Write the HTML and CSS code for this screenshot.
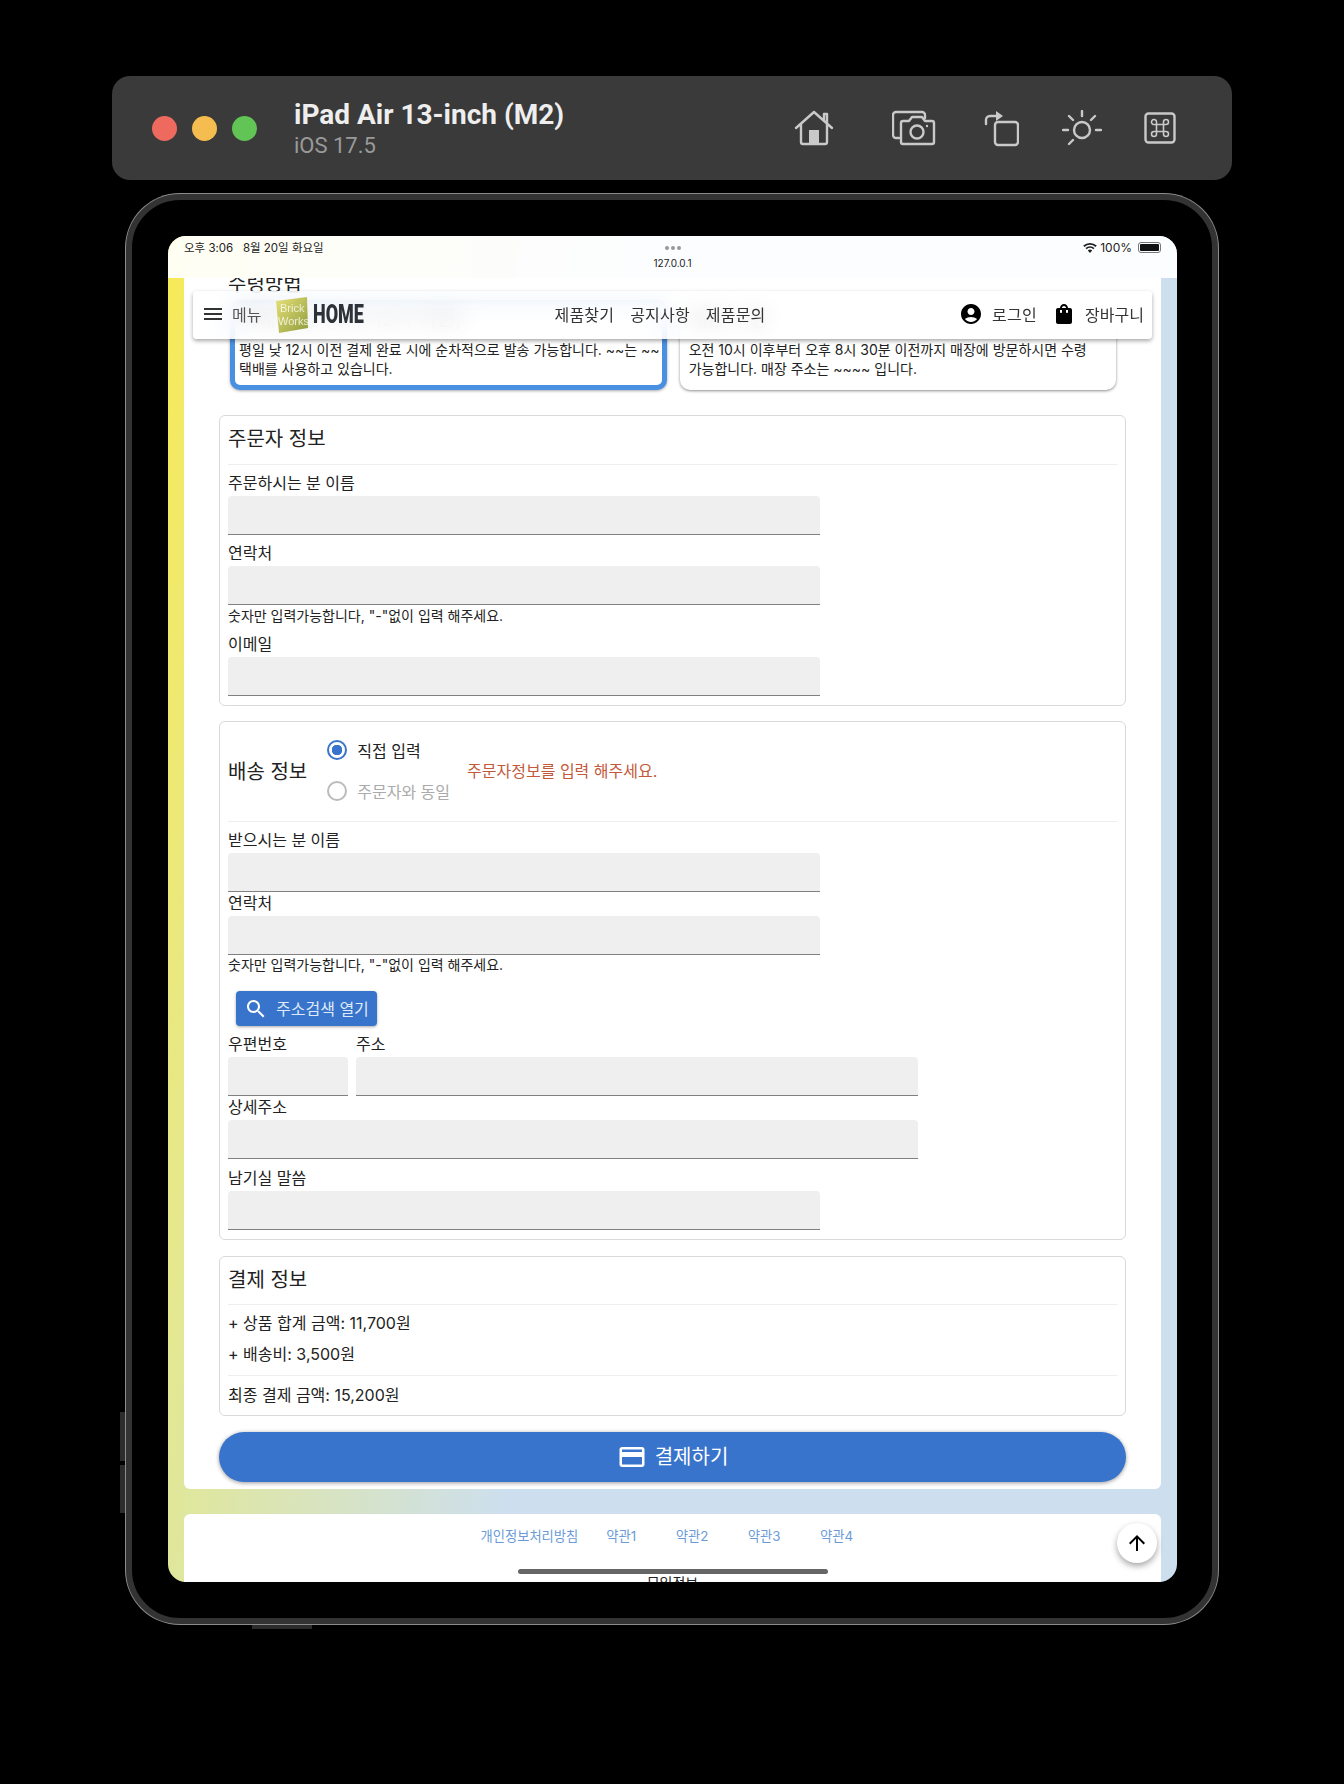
FILE: index.html
```html
<!DOCTYPE html>
<html lang="ko">
<head>
  <meta charset="UTF-8" />
  <meta name="viewport" content="width=device-width, initial-scale=1.0"/>
  <title>주문하기</title>
  <link rel="stylesheet" href="styles.css">
</head>
<body>
  <header class="sim-bar">
    <div class="sim-dots">
      <span class="dot dot-red"></span>
      <span class="dot dot-yellow"></span>
      <span class="dot dot-green"></span>
    </div>
    <div class="sim-name">
      <div class="sim-title">iPad Air 13-inch (M2)</div>
      <div class="sim-os">iOS 17.5</div>
    </div>
    <div class="sim-icons">
      <svg class="sim-icon icon-home" width="40" height="36" viewBox="0 0 40 36"><path d="M2 18 20 2l18 16M7 14v18a2 2 0 0 0 2 2h22a2 2 0 0 0 2-2V14M30 10V4h3v9"/><rect class="solid" x="15" y="20" width="10" height="13"/></svg>
      <svg class="sim-icon icon-camera" width="44" height="36" viewBox="0 0 44 36"><path d="M7 28H4a3 3 0 0 1-3-3V5a3 3 0 0 1 3-3h26a3 3 0 0 1 3 3v3"/><path d="M11 11h6l3-4h10l3 4h7a2 2 0 0 1 2 2v19a2 2 0 0 1-2 2H11a2 2 0 0 1-2-2V13a2 2 0 0 1 2-2z"/><circle cx="25" cy="22" r="6.5"/><circle class="solid" cx="35" cy="16" r="1.2"/></svg>
      <svg class="sim-icon icon-rotate" width="35" height="37" viewBox="0 0 35 37"><rect x="11" y="12" width="23" height="23" rx="3"/><path d="M2 14V10a4 4 0 0 1 4-4h6"/><path class="solid" d="M12 1l7 5-7 5z"/></svg>
      <svg class="sim-icon icon-sun" width="40" height="36" viewBox="0 0 40 36"><circle cx="20" cy="20" r="8"/><path d="M20 1v5M7 6l4 4M33 6l-4 4M1 20h5M34 20h5M7 34l4-4"/></svg>
      <svg class="sim-icon icon-cmd" width="32" height="32" viewBox="0 0 32 32"><rect x="1.500" y="1.500" width="29" height="29" rx="3"/><path class="thin" d="M12.500 12.500v7M19.500 12.500v7M12.500 12.500h7M12.500 19.500h7M12.500 12.500h-2a2.500 2.500 0 1 1 2-2.500zM19.500 12.500V10a2.500 2.500 0 1 1 2.500 2.500zM12.500 19.500V22a2.500 2.500 0 1 1-2.500-2.500zM19.500 19.500H22a2.500 2.500 0 1 1-2.500 2.500z"/></svg>
    </div>
  </header>

  <div class="device">
    <span class="side-btn side-btn-a"></span>
    <span class="side-btn side-btn-b"></span>
    <span class="side-btn side-btn-c"></span>

    <div class="screen">
      <div class="statusbar">
        <div class="status-left">오후 3:06 &nbsp; 8월 20일 화요일</div>
        <div class="status-mid">
          <div class="status-dots"><i></i><i></i><i></i></div>
          <div class="status-url">127.0.0.1</div>
        </div>
        <div class="status-right">
          <svg width="14" height="11" viewBox="0 0 14 11"><path d="M7 11 4.800 8.500a3.200 3.200 0 0 1 4.400 0zM3.700 7.300 2.500 6a6.700 6.700 0 0 1 9 0l-1.200 1.300a5 5 0 0 0-6.600 0zM1.500 4.900.2 3.500a10.200 10.200 0 0 1 13.600 0l-1.300 1.400a8.300 8.300 0 0 0-11 0z" fill="#222"/></svg>
          <span>100%</span>
          <span class="battery"><i></i></span>
        </div>
      </div>

      <nav class="topnav">
        <div class="nav-left">
          <svg class="nav-burger" width="24" height="24" viewBox="0 0 24 24"><path d="M3 18h18v-2H3v2zm0-5h18v-2H3v2zm0-7v2h18V6H3z"/></svg>
          <span class="nav-menu">메뉴</span>
          <svg class="nav-logo" width="36" height="38" viewBox="0 0 36 38">
            <defs><linearGradient id="logoFill" x1="0" y1="0" x2="1" y2="1"><stop offset="0" stop-color="#e8e27a"/><stop offset="1" stop-color="#8f9c3c"/></linearGradient></defs>
            <path d="M3 5 34 1l1 31-29 5z" fill="url(#logoFill)"/>
            <text x="7" y="16" class="logo-text">Brick</text>
            <text x="5" y="29" class="logo-text">Works</text>
          </svg>
          <span class="nav-home">HOME</span>
        </div>
        <div class="nav-links">
          <span>제품찾기</span>
          <span>공지사항</span>
          <span>제품문의</span>
        </div>
        <div class="nav-right">
          <svg width="24" height="24" viewBox="0 0 24 24"><path d="M12 2C6.480 2 2 6.480 2 12s4.480 10 10 10 10-4.480 10-10S17.520 2 12 2zm0 4c1.930 0 3.500 1.570 3.500 3.500S13.930 13 12 13s-3.500-1.570-3.500-3.500S10.070 6 12 6zm0 14c-2.030 0-4.430-.820-6.140-2.880C7.550 15.800 9.680 15 12 15s4.450.800 6.140 2.120C16.430 19.180 14.030 20 12 20z"/></svg>
          <span class="nav-login">로그인</span>
          <svg width="24" height="24" viewBox="0 0 24 24"><path d="M18 6h-2c0-2.210-1.790-4-4-4S8 3.790 8 6H6c-1.100 0-2 .900-2 2v12c0 1.100.900 2 2 2h12c1.100 0 2-.900 2-2V8c0-1.100-.900-2-2-2zm-8 4c0 .550-.450 1-1 1s-1-.450-1-1V8h2v2zm2-6c1.100 0 2 .900 2 2h-4c0-1.100.900-2 2-2zm4 6c0 .550-.450 1-1 1s-1-.450-1-1V8h2v2z"/></svg>
          <span>장바구니</span>
        </div>
      </nav>

      <div class="page">
        <main class="panel">
          <h3 class="pickup-title">수령방법</h3>
          <div class="pickup-row">
            <div class="pickup-card pickup-active">
              <div class="pickup-head">택배 발송 (오후 12시 이전)</div>
              <p class="pickup-nowrap">평일 낮 12시 이전 결제 완료 시에 순차적으로 발송 가능합니다. ~~는 ~~<br>택배를 사용하고 있습니다.</p>
            </div>
            <div class="pickup-card">
              <div class="pickup-head">매장 수령</div>
              <p>오전 10시 이후부터 오후 8시 30분 이전까지 매장에 방문하시면 수령 가능합니다. 매장 주소는 ~~~~ 입니다.</p>
            </div>
          </div>

          <section class="box box-orderer">
            <div class="box-title">주문자 정보</div>
            <div class="field">
              <label>주문하시는 분 이름</label>
              <input class="text-input input-md" type="text" />
            </div>
            <div class="field">
              <label>연락처</label>
              <input class="text-input input-md" type="text" />
              <div class="hint">숫자만 입력가능합니다, "-"없이 입력 해주세요.</div>
            </div>
            <div class="field">
              <label>이메일</label>
              <input class="text-input input-md" type="text" />
            </div>
          </section>

          <section class="box">
            <div class="ship-head">
              <div class="ship-title">배송 정보</div>
              <div class="radio-group">
                <div class="radio-row"><span class="radio radio-on"></span>직접 입력</div>
                <div class="radio-row radio-off"><span class="radio"></span>주문자와 동일</div>
              </div>
              <div class="ship-warn">주문자정보를 입력 해주세요.</div>
            </div>
            <div class="field">
              <label>받으시는 분 이름</label>
              <input class="text-input input-md" type="text" />
            </div>
            <div class="field field-tight">
              <label>연락처</label>
              <input class="text-input input-md" type="text" />
              <div class="hint">숫자만 입력가능합니다, "-"없이 입력 해주세요.</div>
            </div>
            <button class="addr-btn">
              <svg width="24" height="24" viewBox="0 0 24 24"><path d="M15.500 14h-.790l-.280-.270C15.410 12.590 16 11.110 16 9.500 16 5.910 13.090 3 9.500 3S3 5.910 3 9.500 5.910 16 9.500 16c1.610 0 3.090-.590 4.230-1.570l.270.280v.790l5 4.990L20.490 19l-4.990-5zm-6 0C7.010 14 5 11.990 5 9.500S7.010 5 9.500 5 14 7.010 14 9.500 11.990 14 9.500 14z"/></svg>
              주소검색 열기
            </button>
            <div class="addr-row">
              <div class="field">
                <label>우편번호</label>
                <input class="text-input input-zip" type="text" />
              </div>
              <div class="field">
                <label>주소</label>
                <input class="text-input input-addr" type="text" />
              </div>
            </div>
            <div class="field field-tight">
              <label>상세주소</label>
              <input class="text-input input-lg" type="text" />
            </div>
            <div class="field field-note">
              <label>남기실 말씀</label>
              <input class="text-input input-md" type="text" />
            </div>
          </section>

          <section class="box box-pay">
            <div class="box-title">결제 정보</div>
            <div class="pay-lines">
              <div>+ 상품 합계 금액: 11,700원</div>
              <div>+ 배송비: 3,500원</div>
            </div>
            <div class="pay-total">최종 결제 금액: 15,200원</div>
          </section>

          <button class="pay-btn">
            <svg width="30" height="30" viewBox="0 0 24 24"><path d="M20 4H4c-1.110 0-1.990.890-1.990 2L2 18c0 1.110.890 2 2 2h16c1.110 0 2-.890 2-2V6c0-1.110-.890-2-2-2zm0 14H4v-6h16v6zm0-10H4V6h16v2z"/></svg>
            결제하기
          </button>
        </main>

        <footer class="foot">
          <div class="foot-links">
            <a>개인정보처리방침</a>
            <a class="foot-term">약관1</a>
            <a class="foot-term">약관2</a>
            <a class="foot-term">약관3</a>
            <a class="foot-term">약관4</a>
          </div>
          <div class="foot-info">모임정보</div>
        </footer>
      </div>

      <button class="up-btn">
        <svg width="24" height="24" viewBox="0 0 24 24"><path d="M4 12l1.410 1.410L11 7.830V20h2V7.830l5.580 5.590L20 12l-8-8-8 8z"/></svg>
      </button>
      <span class="home-bar"></span>
    </div>
  </div>
</body>
</html>
```

FILE: styles.css
```css
* {
  box-sizing: border-box;
}

body {
  margin: 0;
  width: 1344px;
  height: 1784px;
  padding-top: 76px;
  overflow: hidden;
  background: #000;
  color: #222;
  font-family: Inter, "Noto Sans CJK KR", sans-serif;
  font-size: 16px;
}

/* simulator title bar */
.sim-bar {
  display: flex;
  align-items: center;
  height: 104px;
  margin: 0 112px;
  padding: 0 56px 0 40px;
  background: #3a3a3a;
  border-radius: 18px;
}

.sim-dots {
  display: flex;
  gap: 15px;
  margin-right: 37px;
}

.dot {
  width: 25px;
  height: 25px;
  border-radius: 50%;
}

.dot-red { background: #ee6a5f; }
.dot-yellow { background: #f5bd4f; }
.dot-green { background: #61c454; }

.sim-title {
  color: #eee;
  font-family: Roboto, sans-serif;
  font-size: 28px;
  font-weight: 700;
  line-height: 36px;
}

.sim-os {
  color: #9a9a9a;
  font-family: Roboto, sans-serif;
  font-size: 22px;
  line-height: 26px;
}

.sim-icons {
  display: flex;
  align-items: center;
  gap: 42px;
  margin-left: auto;
}

.sim-icon {
  flex: none;
  fill: none;
  stroke: #c9c9c9;
  stroke-width: 2.4;
  stroke-linecap: round;
  stroke-linejoin: round;
}

.sim-icon .solid {
  fill: #c9c9c9;
  stroke: none;
}

.sim-icon .thin {
  stroke-width: 1.6;
}

.icon-home { margin-right: 16px; }
.icon-camera { margin-right: 6px; }
.icon-rotate { margin-right: 1px; }

/* device frame */
.device {
  position: relative;
  width: 1092px;
  height: 1430px;
  margin: 14px 0 0 126px;
  padding: 36px 35px 36px 36px;
  background: #000;
  border: 6px solid #333;
  border-radius: 54px;
  box-shadow: 0 0 0 1px #8c8c8c;
}

.side-btn {
  position: absolute;
  background: #2c2c2c;
}

.side-btn-a { left: -12px; top: 1212px; width: 5px; height: 49px; }
.side-btn-b { left: -12px; top: 1265px; width: 5px; height: 48px; }
.side-btn-c { left: 120px; top: 1425px; width: 60px; height: 4px; }

.screen {
  position: relative;
  display: flex;
  flex-direction: column;
  width: 1009px;
  height: 1346px;
  overflow: hidden;
  border-radius: 18px;
  background: linear-gradient(97deg, #f8ea55 0%, #e0e79b 14%, #cddfee 42%, #cddfee 100%);
}

/* ios status bar */
.statusbar {
  display: grid;
  flex: none;
  grid-template-columns: 1fr auto 1fr;
  height: 42px;
  padding: 4px 16px 0;
  background: rgba(255, 255, 255, 0.93);
  font-size: 11.500px;
  line-height: 16px;
}

.status-mid {
  text-align: center;
}

.status-dots {
  display: flex;
  justify-content: center;
  gap: 2px;
  padding-top: 6px;
}

.status-dots i {
  width: 4px;
  height: 4px;
  background: #999;
  border-radius: 50%;
}

.status-url {
  margin-top: 6px;
  font-size: 10px;
  line-height: 14px;
}

.status-right {
  display: flex;
  align-items: flex-start;
  justify-content: flex-end;
  gap: 3px;
  font-size: 12px;
}

.status-right svg {
  margin-top: 2px;
}

.battery {
  width: 23px;
  height: 11px;
  margin-left: 3px;
  margin-top: 2px;
  padding: 1px;
  border: 1px solid #777;
  border-radius: 3px;
}

.battery i {
  display: block;
  height: 100%;
  background: #111;
  border-radius: 1px;
}

/* floating nav */
.topnav {
  position: absolute;
  top: 55px;
  left: 25px;
  z-index: 5;
  display: grid;
  grid-template-columns: 1fr auto 1fr;
  align-items: center;
  width: 959px;
  height: 48px;
  padding: 0 8px 2px;
  background: rgba(255, 255, 255, 0.82);
  backdrop-filter: blur(10px);
  border-radius: 4px;
  box-shadow: 0 2px 4px rgba(0, 0, 0, 0.35);
}

.nav-left, .nav-right, .nav-links {
  display: flex;
  align-items: center;
}

.nav-burger {
  fill: #333;
}

.nav-menu {
  margin: 0 12px 0 7px;
  color: #555;
  font-size: 16px;
}

.nav-logo {
  flex: none;
  margin-top: 2px;
}

.logo-text {
  fill: rgba(255, 255, 255, 0.75);
  font-family: "Liberation Sans", sans-serif;
  font-size: 11px;
}

.nav-home {
  margin-left: 4px;
  color: #2c3238;
  font-family: Roboto, sans-serif;
  font-size: 25px;
  font-weight: 900;
  transform: scaleX(0.72);
  transform-origin: left center;
}

.nav-links {
  gap: 16px;
  margin-right: 25px;
  color: #333;
  letter-spacing: 0.2px;
}

.nav-right {
  justify-content: flex-end;
  color: #333;
}

.nav-right svg {
  margin-right: 9px;
}

.nav-login {
  margin-right: 15px;
  letter-spacing: 0.3px;
}

/* page */
.page {
  flex: 1;
  min-height: 0;
  overflow: hidden;
  padding: 0 16px;
}

.panel {
  margin-top: -6px;
  padding: 0 35px 7px;
  background: #fff;
  border-radius: 0 0 6px 6px;
}

.pickup-title {
  margin: 0;
  padding-left: 9px;
  font-size: 20px;
  font-weight: 400;
  line-height: 24px;
}

.pickup-row {
  display: flex;
  gap: 13px;
  margin: 4px 10px 0 11px;
}

.pickup-card {
  flex: 1;
  height: 90px;
  padding: 7px 9px;
  background: #fff;
  border-radius: 10px;
  box-shadow: 0 1px 3px rgba(0, 0, 0, 0.45);
  word-break: keep-all;
}

.pickup-active {
  padding: 2px 2px 2px 4px;
  border: 5px solid #4a90e2;
  box-shadow: 0 1px 3px rgba(0, 0, 0, 0.35);
}

.pickup-head {
  font-size: 20px;
  line-height: 24px;
}

.pickup-card p {
  margin: 9px 0 0;
  font-size: 14px;
  line-height: 19px;
}

.pickup-card .pickup-nowrap {
  white-space: nowrap;
}

.box {
  margin-top: 16px;
  padding: 0 8px 9px;
  border: 1px solid #d9d9d9;
  border-radius: 6px;
}

.box-orderer {
  margin-top: 25px;
}

.box-orderer .hint {
  line-height: 21px;
}

.box-orderer + .box {
  margin-top: 15px;
}

.box-title {
  height: 49px;
  border-bottom: 1.5px solid #eee;
  font-size: 20px;
  line-height: 47px;
}

.field {
  margin-top: 8px;
}

.field-tight {
  margin-top: 1px;
}

.field-note {
  margin-top: 9px;
}

.field label {
  display: block;
  margin-bottom: 3px;
  line-height: 20px;
}

.text-input {
  display: block;
  height: 39px;
  padding: 0 8px;
  background: #efefef;
  border: none;
  border-bottom: 1px solid #808080;
  border-radius: 4px 4px 0 0;
}

.input-md { width: 592px; }
.input-lg { width: 690px; }
.input-zip { width: 120px; }
.input-addr { width: 562px; }

.hint {
  font-size: 14px;
  line-height: 20px;
}

.ship-head {
  display: flex;
  align-items: center;
  height: 100px;
  padding-bottom: 2px;
  border-bottom: 1.5px solid #eee;
}

.ship-title {
  margin-right: 20px;
  font-size: 20px;
}

.radio-row {
  display: flex;
  align-items: center;
  gap: 10px;
  height: 41px;
}

.radio-off {
  color: #aaa;
}

.radio {
  width: 20px;
  height: 20px;
  border: 2px solid #bbb;
  border-radius: 50%;
}

.radio-on {
  border-color: #3874cb;
  background: radial-gradient(circle, #3874cb 0 5px, #fff 5.5px);
}

.ship-warn {
  margin: 0 0 2px 17px;
  color: #c4593a;
}

.addr-btn {
  display: flex;
  align-items: center;
  gap: 8px;
  width: 141px;
  height: 35px;
  margin: 16px 0 0 8px;
  padding: 0 0 2px 8px;
  background: #3874cb;
  border: none;
  border-radius: 4px;
  box-shadow: 0 1px 3px rgba(0, 0, 0, 0.35);
  color: #dfe9f7;
  font-family: inherit;
  font-size: 16px;
  white-space: nowrap;
}

.addr-btn svg {
  flex: none;
  margin-top: 2px;
  fill: #fff;
}

.addr-row {
  display: flex;
  gap: 8px;
}

.addr-row .field {
  margin-top: 8px;
}

.box-pay .box-title {
  height: 48px;
}

.pay-lines {
  line-height: 31px;
  padding: 3px 0 5px;
  border-bottom: 1.5px solid #eee;
}

.pay-total {
  height: 30px;
  padding-top: 9px;
  line-height: 20px;
}

.pay-btn {
  display: flex;
  align-items: center;
  justify-content: center;
  gap: 8px;
  width: 100%;
  height: 50px;
  margin-top: 16px;
  padding: 0 0 3px;
  background: #3874cb;
  border: none;
  border-radius: 25px;
  box-shadow: 0 1px 4px rgba(0, 0, 0, 0.4);
  color: #fff;
  font-family: inherit;
  font-size: 20px;
}

.pay-btn svg {
  margin-top: 3px;
  fill: #fff;
}

/* footer */
.foot {
  height: 200px;
  margin-top: 25px;
  padding-top: 12px;
  background: #fff;
  border-radius: 6px;
}

.foot-links {
  display: flex;
  justify-content: center;
  gap: 28px;
  color: #6a9bd8;
  font-size: 13.300px;
  line-height: 20px;
}

.foot-term {
  padding-right: 11.500px;
}

.foot-info {
  margin-top: 27px;
  font-size: 14px;
  line-height: 20px;
  text-align: center;
}

.up-btn {
  position: absolute;
  top: 1287px;
  left: 949px;
  display: flex;
  align-items: center;
  justify-content: center;
  width: 40px;
  height: 40px;
  padding: 0;
  background: #fff;
  border: none;
  border-radius: 50%;
  box-shadow: 0 3px 6px rgba(0, 0, 0, 0.35);
}

.home-bar {
  position: absolute;
  left: 350px;
  bottom: 8px;
  width: 310px;
  height: 5px;
  background: #666;
  border-radius: 3px;
}
```
